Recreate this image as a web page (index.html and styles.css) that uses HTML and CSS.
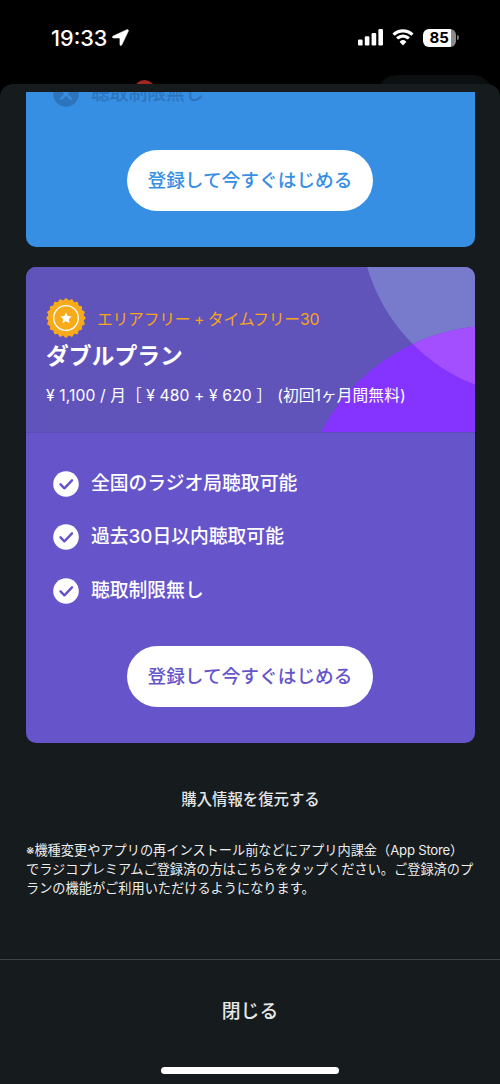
FILE: index.html
```html
<!DOCTYPE html>
<html lang="ja">
<head>
<meta charset="utf-8">
<title>プラン登録</title>
<link rel="stylesheet" href="styles.css">
</head>
<body>
<div class="phone">
  <header class="status">
    <div class="clock">19:33
      <svg class="arrow" viewBox="0 0 18 18"><path d="M15.800.7 1.200 7.500C0 8.100.300 9.500 1.500 9.500h6.900v6.900c0 1.300 1.500 1.500 2 .4L17.300 2.200c.4-1-.5-1.900-1.500-1.500z" fill="#fff" stroke="#fff" stroke-width=".6"/></svg>
    </div>
    <div class="indicators">
      <svg class="signal" viewBox="0 0 26 17" fill="#fff"><rect x="0" y="10.500" width="4.600" height="6" rx="1.300"/><rect x="6.800" y="7.300" width="4.600" height="9.200" rx="1.300"/><rect x="13.600" y="4" width="4.600" height="12.500" rx="1.300"/><rect x="20.400" y="0" width="4.600" height="16.500" rx="1.300"/></svg>
      <svg class="wifi" viewBox="0 0 22 17" fill="#fff"><path d="M11 3.500c3 0 5.800 1.150 7.900 3.100.2.200.5.200.7 0l1.600-1.600c.2-.2.2-.6 0-.8C18.500 1.600 14.900.200 11 .200S3.500 1.600.800 4.200c-.2.200-.2.600 0 .8l1.600 1.600c.2.200.5.200.7 0C5.200 4.650 8 3.500 11 3.500z"/><path d="M11 8.700c1.600 0 3.100.6 4.300 1.600.2.200.5.200.7 0l1.600-1.600c.3-.3.2-.6 0-.8A9.900 9.900 0 0 0 11 5.400a9.900 9.900 0 0 0-6.600 2.500c-.2.200-.3.500 0 .8L6 10.300c.2.200.5.200.7 0 1.200-1 2.700-1.600 4.300-1.600z"/><path d="M14.100 12.200c.2-.2.200-.6 0-.8a4.800 4.800 0 0 0-6.200 0c-.2.200-.2.600 0 .8l2.700 2.800c.3.300.5.300.8 0z" transform="translate(0 1)"/></svg>
      <div class="battery"><span class="level">85</span><i class="cap"></i></div>
    </div>
    <i class="behind-dot"></i>
    <i class="behind-pill"></i>
  </header>

  <main class="sheet">
    <div class="scroll">
      <section class="card blue">
        <div class="feature faded">
          <svg class="mark" viewBox="0 0 26 26"><circle cx="13" cy="13" r="12.800" fill="#2c75bd"/><path d="m8.300 8.300 9.400 9.400m0-9.400-9.400 9.400" stroke="#378fe4" stroke-width="2.400" stroke-linecap="round"/></svg>
          <span>聴取制限無し</span>
        </div>
        <button class="cta">登録して今すぐはじめる</button>
      </section>

      <section class="card violet">
        <div class="head">
          <svg class="shapes" viewBox="0 0 449 165">
            <defs><clipPath id="upper"><circle cx="513.800" cy="-50" r="179.700"/></clipPath></defs>
            <circle cx="513.800" cy="-50" r="179.700" fill="#787bcb"/>
            <circle cx="470.500" cy="256" r="197.600" fill="#8533ff"/>
            <circle cx="470.500" cy="256" r="197.600" fill="#a34eff" clip-path="url(#upper)"/>
          </svg>
          <div class="tagline">
            <svg class="badge" viewBox="-20 -20 40 40"><path id="seal" fill="#f7ab1b"/><circle r="12.300" fill="none" stroke="#fff" stroke-width="1.300"/><path d="m0-5.600 1.700 3.500 3.900.5-2.800 2.700.7 3.900L0 3.200-3.500 5l.7-3.900-2.800-2.700 3.900-.5z" fill="#fff"/></svg>
            <span>エリアフリー + タイムフリー30</span>
          </div>
          <h1 class="title">ダブルプラン</h1>
          <p class="price"><span>¥ 1,100 / 月［ ¥ 480 + ¥ 620 ］</span><span class="trial">(初回1ヶ月間無料)</span></p>
        </div>
        <div class="features">
          <div class="feature"><svg class="mark" viewBox="0 0 26 26"><circle cx="13" cy="13" r="12.800" fill="#fff"/><path d="m7.500 13.300 3.900 4 7.600-8" fill="none" stroke="#6655ca" stroke-width="2.400" stroke-linecap="round" stroke-linejoin="round"/></svg><span>全国のラジオ局聴取可能</span></div>
          <div class="feature"><svg class="mark" viewBox="0 0 26 26"><circle cx="13" cy="13" r="12.800" fill="#fff"/><path d="m7.500 13.300 3.900 4 7.600-8" fill="none" stroke="#6655ca" stroke-width="2.400" stroke-linecap="round" stroke-linejoin="round"/></svg><span>過去30日以内聴取可能</span></div>
          <div class="feature"><svg class="mark" viewBox="0 0 26 26"><circle cx="13" cy="13" r="12.800" fill="#fff"/><path d="m7.500 13.300 3.900 4 7.600-8" fill="none" stroke="#6655ca" stroke-width="2.400" stroke-linecap="round" stroke-linejoin="round"/></svg><span>聴取制限無し</span></div>
        </div>
        <button class="cta">登録して今すぐはじめる</button>
      </section>

      <div class="restore">購入情報を復元する</div>
      <p class="note">※機種変更やアプリの再インストール前などにアプリ内課金（<span class="latin">App Store</span>）<br>でラジコプレミアムご登録済の方はこちらをタップください。ご登録済のプ<br>ランの機能がご利用いただけるようになります。</p>
    </div>
    <footer class="footer">
      <div class="close">閉じる</div>
      <i class="home"></i>
    </footer>
  </main>
</div>
<script src="seal.js"></script>
</body>
</html>
```
FILE: seal.js
```js
// Scalloped outline of the badge: 20 rounded teeth
var teeth = 20, d = '';
function at(r, a) {
  return (r * Math.sin(a)).toFixed(2) + ' ' + (-r * Math.cos(a)).toFixed(2);
}
for (var i = 0; i < teeth; i++) {
  var a = i * 2 * Math.PI / teeth, s = Math.PI / teeth;
  d += (i ? 'L' : 'M') + at(17.8, a - s) + 'L' + at(19.2, a - s * 0.35) +
    'Q' + at(20.3, a) + ' ' + at(19.2, a + s * 0.35);
}
document.getElementById('seal').setAttribute('d', d + 'Z');
```
FILE: styles.css
```css
* { box-sizing: border-box; }
body {
  margin: 0;
  background: #000;
  color: #fff;
  font-family: Inter, "Noto Sans CJK JP", sans-serif;
}
h1, p { margin: 0; }
i { display: block; }
svg { display: block; flex: none; }
.phone {
  width: 500px;
  height: 1084px;
  overflow: hidden;
  display: flex;
  flex-direction: column;
}

/* Status bar */
.status {
  position: relative;
  flex: none;
  height: 84px;
  padding: 22px 41px 0 51px;
  display: flex;
  justify-content: space-between;
  align-items: flex-start;
  overflow: hidden;
}
.clock {
  display: flex;
  align-items: center;
  gap: 5px;
  height: 31px;
  font-size: 21.7px;
  font-weight: 500;
}
.arrow { width: 17px; height: 17px; }
.indicators { display: flex; align-items: center; height: 31px; }
.signal { width: 26px; height: 17px; }
.wifi { width: 22px; height: 17px; margin-left: 8px; }
.battery { display: flex; align-items: center; margin-left: 9px; gap: 1px; }
.level {
  width: 33px;
  height: 18px;
  border-radius: 6px;
  background: linear-gradient(90deg, #fff 28px, #8b8b8d 28px);
  color: #000;
  font-size: 15px;
  font-weight: 700;
  line-height: 18px;
  padding-left: 6.5px;
}
.cap { width: 2px; height: 5px; border-radius: 0 2px 2px 0; background: #77777a; }
.behind-dot {
  position: absolute;
  left: 134px;
  top: 80px;
  width: 21px;
  height: 21px;
  border-radius: 50%;
  background: #a02824;
}
.behind-pill {
  position: absolute;
  left: 377px;
  top: 75px;
  width: 116px;
  height: 40px;
  border-radius: 20px;
  background: #0b0f10;
}

/* Sheet */
.sheet {
  flex: 1;
  min-height: 0;
  background: #161b1d;
  border-radius: 13px 13px 0 0;
  padding-top: 8px;
  display: flex;
  flex-direction: column;
}
.scroll { height: 867px; padding: 0 25px 0 26px; overflow: hidden; }
.card { border-radius: 10px; overflow: hidden; }
.blue { height: 155px; background: #378fe4; border-radius: 0 0 10px 10px; }
.violet { height: 476px; margin-top: 20px; background: #6655ca; }
.feature {
  display: flex;
  align-items: center;
  gap: 12px;
  height: 26px;
  padding-left: 27px;
  font-size: 18.8px;
  font-weight: 500;
  white-space: nowrap;
}
.feature span { padding-bottom: 5px; }
.mark { width: 26px; height: 26px; }
.faded { margin-top: -11px; color: #2c75bd; }
.cta {
  display: block;
  width: 246px;
  height: 61px;
  margin: 43px auto 0 101px;
  padding: 0;
  border: 0;
  border-radius: 31px;
  background: #fff;
  font: 500 18.7px/61px Inter, "Noto Sans CJK JP", sans-serif;
  white-space: nowrap;
}
.blue .cta { color: #378fe4; }
.violet .cta { color: #6655ca; }

.head {
  position: relative;
  height: 166px;
  padding: 31px 0 0 20px;
  background: #6054bb;
  border-bottom: 1px solid #5a4db4;
}
.shapes { position: absolute; left: 0; top: 0; width: 449px; height: 165px; }
.tagline {
  position: relative;
  display: flex;
  align-items: center;
  gap: 11px;
  height: 40px;
  color: #f7a51b;
  font-size: 15.8px;
  letter-spacing: -.25px;
  word-spacing: -.5px;
}
.badge { width: 40px; height: 40px; }
.title {
  position: relative;
  height: 34px;
  font-size: 22.8px;
  line-height: 35px;
  font-weight: 700;
}
.price {
  position: relative;
  display: flex;
  height: 24px;
  margin-top: 12px;
  font-size: 15.7px;
  letter-spacing: .1px;
  line-height: 24px;
  white-space: nowrap;
}
.trial { margin-left: 5px; }
.features { display: grid; gap: 27.5px; padding-top: 37.5px; }
.violet > .cta { margin-top: 42.5px; }

.restore {
  height: 24px;
  margin-top: 45px;
  text-align: center;
  font-size: 15.4px;
  line-height: 24px;
  font-weight: 500;
  color: #e3e5e6;
}
.note {
  margin-top: 29px;
  font-size: 13.2px;
  line-height: 19px;
  white-space: nowrap;
  color: #eceded;
}
.latin { letter-spacing: -.25px; }

/* Footer */
.footer {
  flex: 1;
  border-top: 1px solid #3d4246;
  display: flex;
  flex-direction: column;
  align-items: center;
}
.close {
  margin-top: 37px;
  height: 30px;
  font-size: 18.8px;
  line-height: 30px;
  font-weight: 500;
  color: #e6e7e8;
}
.home { width: 178px; height: 7px; margin-top: 40px; border-radius: 4px; background: #fff; }
```
